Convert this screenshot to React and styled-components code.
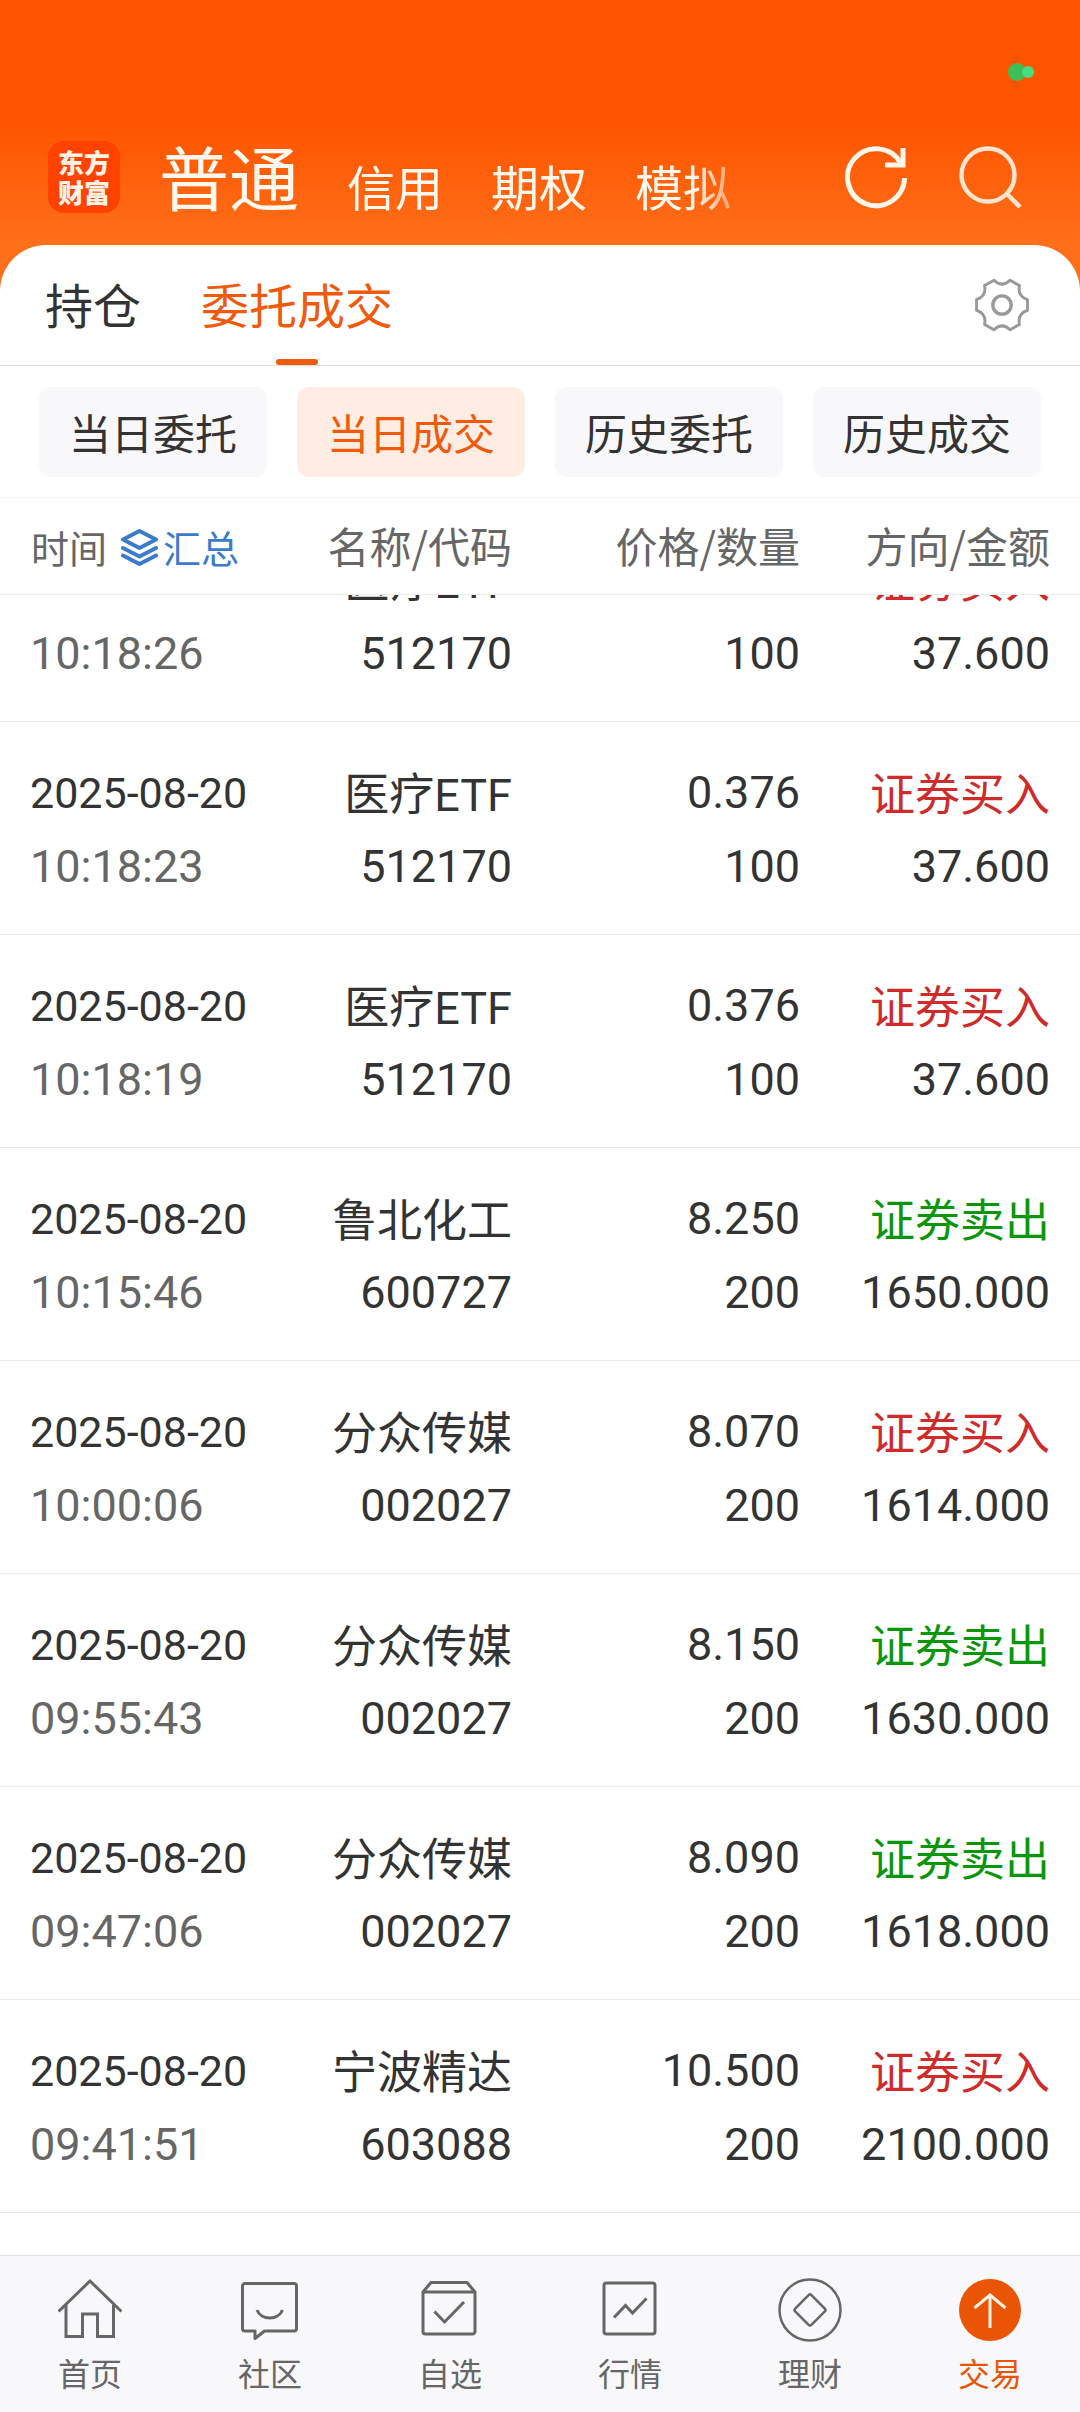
import React, { useLayoutEffect, useRef, useState } from "react";
import styled, { createGlobalStyle } from "styled-components";

const GlobalStyle = createGlobalStyle`
  *, *::before, *::after { box-sizing: border-box; }
  body { margin: 0; }
  button { font: inherit; border: 0; margin: 0; padding: 0; background: none; cursor: pointer; }
  a { color: inherit; text-decoration: none; }
  svg { display: block; flex: none; }
`;

const cjk = `"Noto Sans CJK SC", Roboto, sans-serif`;
const latin = `Roboto, "Noto Sans CJK SC", sans-serif`;

const Screen = styled.div`
  height: 100vh;
  display: flex;
  flex-direction: column;
  background: linear-gradient(to bottom, #ff5500 0, #ff5500 124px, #ff6f1a 245px);
  font-family: ${cjk};
  color: #333;
`;

const StatusBar = styled.div`
  display: flex;
  justify-content: flex-end;
  align-items: center;
  height: 140px;
  padding: 4px 46px 0 0;
`;

const TopBar = styled.header`
  display: flex;
  align-items: center;
  height: 105px;
  padding: 0 58px 31px 48px;
`;

const Logo = styled.div`
  flex: none;
  width: 72px;
  height: 72px;
  padding: 6px 10px;
  border-radius: 16px;
  background: #ff4200;
  color: #fff3e6;
  font-weight: 900;
  font-size: 26px;
  line-height: 30px;
`;

const AccountNav = styled.nav`
  flex: 1;
  min-width: 0;
  display: flex;
  align-items: baseline;
  gap: 48px;
  padding: 6px 0 0 39px;
  mask-image: linear-gradient(to right, #000 calc(100% - 124px), transparent calc(100% - 60px));
`;

const AccountTab = styled.button`
  flex: none;
  color: #fff8ee;
  font-size: ${(p) => (p.$active ? 70 : 48)}px;
  line-height: 104px;
`;

const TopActions = styled.div`
  flex: none;
  display: flex;
  gap: 50px;
  margin-left: 26px;
`;

const Panel = styled.main`
  flex: 1;
  min-height: 0;
  display: flex;
  flex-direction: column;
  overflow: hidden;
  border-radius: 46px 46px 0 0;
  background: #fff;
`;

const TabRow = styled.div`
  flex: none;
  display: flex;
  align-items: stretch;
  gap: 60px;
  height: 121px;
  padding: 0 51px 0 45px;
  border-bottom: 1px solid #dcdcdc;
`;

const Tab = styled.button`
  display: flex;
  flex-direction: column;
  align-items: center;
  justify-content: space-between;
  padding-top: 3px;
  font-size: 48px;
  line-height: 111px;
  color: ${(p) => (p.$active ? "#f05a0c" : "#333")};

  &::after {
    content: "";
    width: 42px;
    height: 6px;
    border-radius: 3px;
    background: ${(p) => (p.$active ? "#f05a0c" : "transparent")};
  }
`;

const SettingsButton = styled.button`
  margin-left: auto;
`;

const ChipRow = styled.div`
  flex: none;
  display: flex;
  gap: 30px;
  padding: 21px 39px 20px;
  border-bottom: 1px solid #f5f5f5;
`;

const Chip = styled.button`
  flex: 1;
  height: 90px;
  border-radius: 12px;
  font-size: 42px;
  line-height: 90px;
  color: ${(p) => (p.$active ? "#f05a0c" : "#333")};
  background: ${(p) => (p.$active ? "#ffede4" : "#f8f8fa")};
`;

const Table = styled.table`
  flex: 1;
  min-height: 0;
  display: flex;
  flex-direction: column;
  font-family: ${latin};
`;

const TableHead = styled.thead`
  flex: none;
  display: block;
`;

const TableBody = styled.tbody`
  flex: 1;
  min-height: 0;
  display: block;
  overflow-y: auto;
  padding-bottom: 42px;
  scrollbar-width: none;
`;

const Row = styled.tr`
  display: grid;
  grid-template-columns: 1fr 240px 288px 250px;
  padding: 0 30px;
  border-bottom: 1px solid #ebebeb;
`;

const HeadCell = styled.th`
  padding: 0 0 2px;
  color: #666;
  font-family: ${cjk};
  font-size: 42px;
  font-weight: 400;
  line-height: 94px;
  text-align: right;
`;

const TimeHead = styled.div`
  display: flex;
  align-items: center;
  gap: 14px;
  padding: 4px 0 0 1px;
  font-size: 38px;
  line-height: 90px;
`;

const SummaryButton = styled.button`
  display: flex;
  align-items: center;
  gap: 5px;
  color: #3b7bcd;
`;

const Cell = styled.td`
  padding: 34px 0 30px;
  font-size: 45px;
  line-height: 74px;
  text-align: ${(p) => (p.$left ? "left" : "right")};
  white-space: nowrap;
`;

const Line = styled.div`
  color: ${(p) => p.$color || "#333"};
`;

const DateLine = styled(Line)`
  font-size: 43px;
`;

const LabelLine = styled(Line)`
  padding-top: 6px;
  line-height: 68px;
`;

const BottomNav = styled.nav`
  flex: none;
  display: flex;
  height: 157px;
  border-top: 1px solid #e0e0e2;
  background: #f8f8fa;
`;

const NavItem = styled.a`
  flex: 1;
  display: flex;
  flex-direction: column;
  align-items: center;
  gap: 8px;
  padding-top: 22px;
  font-size: 32px;
  line-height: 44px;
  color: ${(p) => (p.$active ? "#e95504" : "#666")};
`;

const Icon = ({ size = 64, box = 64, stroke = 3, children, ...rest }) => (
  <svg
    width={size}
    height={size}
    viewBox={`0 0 ${box} ${box}`}
    fill="none"
    stroke="currentColor"
    strokeWidth={stroke}
    aria-hidden="true"
    {...rest}
  >
    {children}
  </svg>
);

const RefreshIcon = () => (
  <Icon stroke={5} color="#fff6ea">
    <path d="M60.5 33A28.5 28.5 0 1 1 57 18.5" />
    <path d="M59 3V20H41" />
  </Icon>
);

const SearchIcon = () => (
  <Icon stroke={4.5} color="#ffe4d0">
    <circle cx="30" cy="30" r="26.5" />
    <path d="M49 49L62 62" />
  </Icon>
);

const GearIcon = () => (
  <Icon size={54} box={56} stroke={3} color="#999" strokeLinejoin="round">
    <path d="M54.4 22.4V33.6C47 36 44.500 40.500 46.1 48.1L36.3 53.7C31 48.500 25 48.500 19.7 53.7L9.9 48.1C11.500 40.500 9 36 1.6 33.6V22.4C9 20 11.500 15.500 9.9 7.9L19.7 2.3C25 7.500 31 7.500 36.3 2.3L46.1 7.9C44.500 15.500 47 20 54.4 22.4Z" />
    <circle cx="28" cy="28" r="9.5" strokeWidth="3.5" />
  </Icon>
);

const LayersIcon = () => (
  <Icon size={37} box={37} stroke={4} strokeLinejoin="round" strokeLinecap="round">
    <path d="M18.5 2L35 10.5L18.5 19L2 10.5Z" />
    <path d="M2 19L18.5 27.5L35 19" />
    <path d="M2 26.5L18.5 35L35 26.5" />
  </Icon>
);

const navItems = [
  {
    label: "首页",
    icon: (
      <Icon>
        <path d="M0.5 33.5L32 3L63.5 33.5" />
        <path d="M8 27V58.5H24.5V36H39.5V58.5H55.5V27" />
      </Icon>
    ),
  },
  {
    label: "社区",
    icon: (
      <Icon strokeLinejoin="round">
        <path d="M7 5.5H56A2.5 2.5 0 0 1 58.5 8V50.5A2.5 2.5 0 0 1 56 53H26.5L17 60.5V53H7A2.5 2.5 0 0 1 4.5 50.5V8A2.5 2.5 0 0 1 7 5.5Z" />
        <path d="M19 32C23 42.5 40.5 42.5 44.5 32" />
      </Icon>
    ),
  },
  {
    label: "自选",
    icon: (
      <Icon strokeLinejoin="round">
        <path d="M5 14L13 4.5H49L57 14V53.5A2.5 2.5 0 0 1 54.5 56H7.5A2.5 2.5 0 0 1 5 53.5ZM5 14H57" />
        <path d="M16.5 33.5L26.5 44L46 24" />
      </Icon>
    ),
  },
  {
    label: "行情",
    icon: (
      <Icon>
        <rect x="6" y="5" width="51" height="51" rx="2.5" />
        <path d="M16 39.5L27.5 27.5L34.5 35L48.5 20.5" />
      </Icon>
    ),
  },
  {
    label: "理财",
    icon: (
      <Icon strokeLinejoin="round" stroke={2.5}>
        <circle cx="32" cy="32" r="30.5" />
        <rect x="20.5" y="20.5" width="23" height="23" rx="2" transform="rotate(45 32 32)" />
      </Icon>
    ),
  },
  {
    label: "交易",
    icon: (
      <Icon>
        <circle cx="32" cy="32" r="31" fill="#e95504" stroke="none" />
        <path d="M32 50V17M16.5 30L32 17L47.5 30" stroke="#fff3e4" />
      </Icon>
    ),
  },
];

const trades = [
  ["10:18:26", "医疗ETF", "512170", "0.376", "100", "buy", "37.600"],
  ["10:18:23", "医疗ETF", "512170", "0.376", "100", "buy", "37.600"],
  ["10:18:19", "医疗ETF", "512170", "0.376", "100", "buy", "37.600"],
  ["10:15:46", "鲁北化工", "600727", "8.250", "200", "sell", "1650.000"],
  ["10:00:06", "分众传媒", "002027", "8.070", "200", "buy", "1614.000"],
  ["09:55:43", "分众传媒", "002027", "8.150", "200", "sell", "1630.000"],
  ["09:47:06", "分众传媒", "002027", "8.090", "200", "sell", "1618.000"],
  ["09:41:51", "宁波精达", "603088", "10.500", "200", "buy", "2100.000"],
];

const sides = {
  buy: { label: "证券买入", color: "#d02b2b" },
  sell: { label: "证券卖出", color: "#0a960a" },
};

export default function App() {
  const [tab, setTab] = useState("委托成交");
  const [chip, setChip] = useState("当日成交");
  const list = useRef(null);

  useLayoutEffect(() => {
    list.current.scrollTop = list.current.scrollHeight;
  }, []);

  return (
    <>
      <GlobalStyle />
      <Screen>
        <StatusBar>
          <svg width="26" height="18" viewBox="0 0 26 18" aria-hidden="true">
            <circle cx="9" cy="9" r="9" fill="#3fbf57" />
            <circle cx="20" cy="9" r="6" fill="#45df82" />
          </svg>
        </StatusBar>
        <TopBar>
          <Logo>
            东方
            <br />
            财富
          </Logo>
          <AccountNav>
            {["普通", "信用", "期权", "模拟"].map((name, i) => (
              <AccountTab key={name} type="button" $active={i === 0}>
                {name}
              </AccountTab>
            ))}
          </AccountNav>
          <TopActions>
            <button type="button" aria-label="刷新">
              <RefreshIcon />
            </button>
            <button type="button" aria-label="搜索">
              <SearchIcon />
            </button>
          </TopActions>
        </TopBar>
        <Panel>
          <TabRow>
            {["持仓", "委托成交"].map((name) => (
              <Tab key={name} type="button" $active={tab === name} onClick={() => setTab(name)}>
                {name}
              </Tab>
            ))}
            <SettingsButton type="button" aria-label="设置">
              <GearIcon />
            </SettingsButton>
          </TabRow>
          <ChipRow>
            {["当日委托", "当日成交", "历史委托", "历史成交"].map((name) => (
              <Chip key={name} type="button" $active={chip === name} onClick={() => setChip(name)}>
                {name}
              </Chip>
            ))}
          </ChipRow>
          <Table>
            <TableHead>
              <Row>
                <HeadCell scope="col">
                  <TimeHead>
                    时间
                    <SummaryButton type="button">
                      <LayersIcon />
                      汇总
                    </SummaryButton>
                  </TimeHead>
                </HeadCell>
                <HeadCell scope="col">名称/代码</HeadCell>
                <HeadCell scope="col">价格/数量</HeadCell>
                <HeadCell scope="col">方向/金额</HeadCell>
              </Row>
            </TableHead>
            <TableBody ref={list}>
              {trades.map(([time, name, code, price, count, side, amount]) => (
                <Row key={time}>
                  <Cell $left>
                    <DateLine>2025-08-20</DateLine>
                    <Line $color="#666">{time}</Line>
                  </Cell>
                  <Cell>
                    <LabelLine>{name}</LabelLine>
                    <Line>{code}</Line>
                  </Cell>
                  <Cell>
                    <Line>{price}</Line>
                    <Line>{count}</Line>
                  </Cell>
                  <Cell>
                    <LabelLine $color={sides[side].color}>{sides[side].label}</LabelLine>
                    <Line>{amount}</Line>
                  </Cell>
                </Row>
              ))}
            </TableBody>
          </Table>
        </Panel>
        <BottomNav>
          {navItems.map(({ label, icon }) => (
            <NavItem key={label} href="#" $active={label === "交易"}>
              {icon}
              {label}
            </NavItem>
          ))}
        </BottomNav>
      </Screen>
    </>
  );
}
